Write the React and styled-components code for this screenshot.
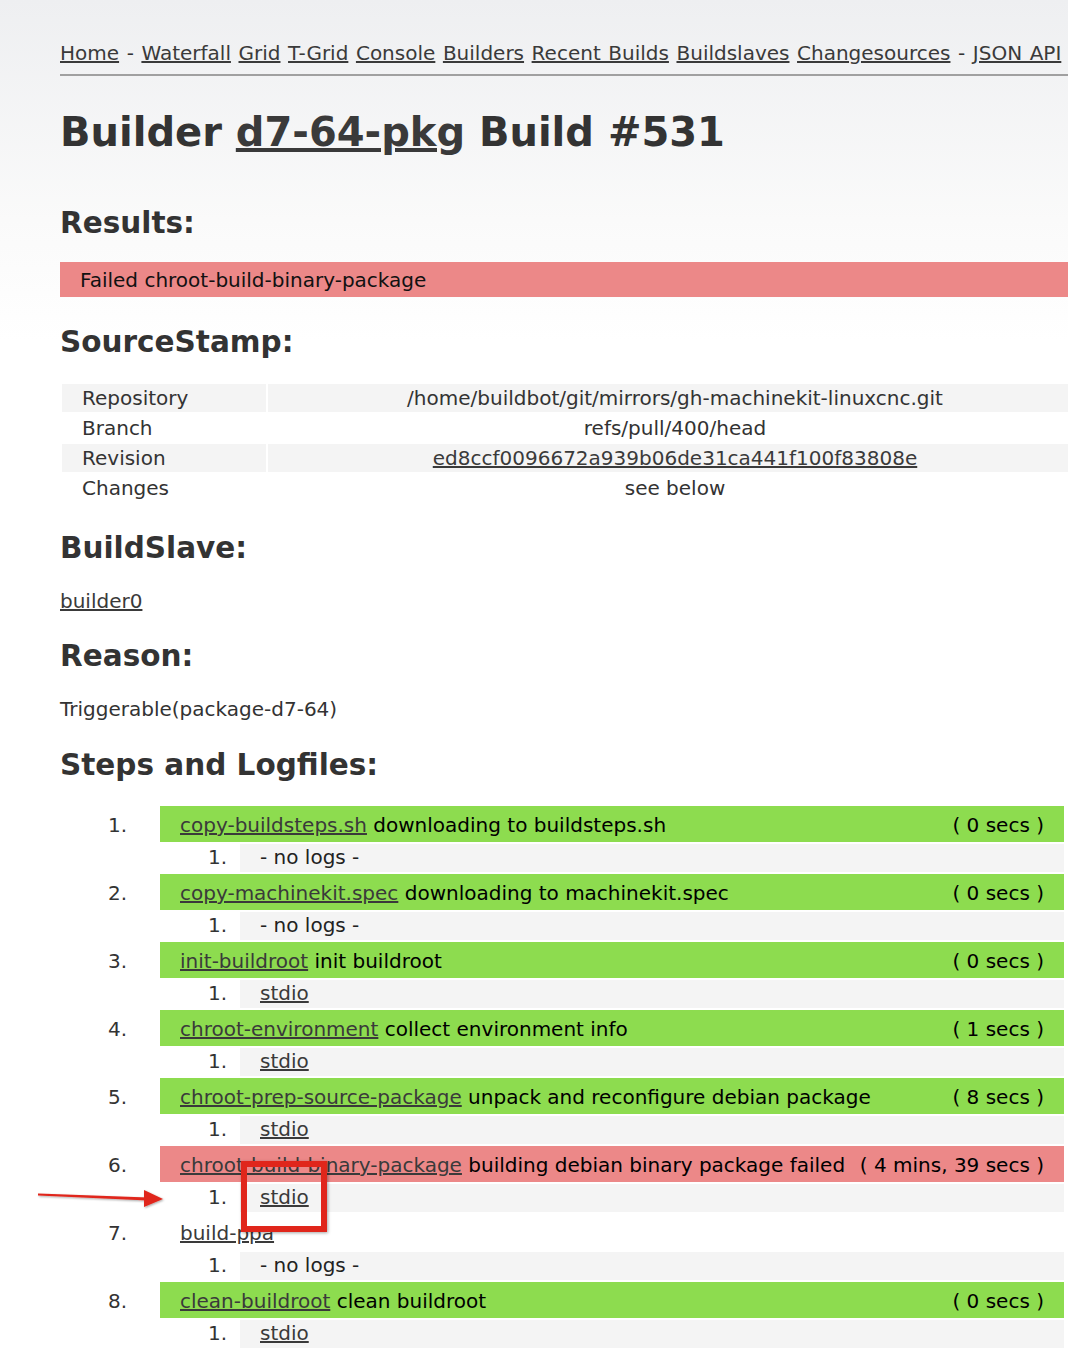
import React from 'react'
import styled, { createGlobalStyle } from 'styled-components'

const GlobalStyle = createGlobalStyle`
  html, body {
    margin: 0;
    padding: 0;
  }
  body {
    background: linear-gradient(to bottom, #eeeff1 0px, #fafafa 220px, #ffffff 340px) no-repeat #fff;
    font-family: "DejaVu Sans", Verdana, sans-serif;
    font-size: 20px;
    color: #333;
    overflow-x: hidden;
  }
  a {
    color: #3a3a3a;
    text-decoration: underline;
  }
`

const Page = styled.div`
  position: relative;
  width: 1022px;
  height: 1358px;
  padding-left: 60px;
  display: flex;
  flex-direction: column;
`

const Nav = styled.div`
  margin-top: 41px;
  line-height: 24px;
  padding-bottom: 9px;
  border-bottom: 2px solid #a0a0a0;
  white-space: nowrap;
  word-spacing: 1.2px;
`

const Title = styled.h1`
  margin: 32px 0 0;
  font-size: 40px;
  line-height: 48px;
  font-weight: bold;
  color: #333;
`

const Heading = styled.h2`
  margin: ${p => p.$top}px 0 0;
  font-size: 29.5px;
  line-height: 36px;
  font-weight: bold;
  color: #333;
`

const ResultBar = styled.div`
  margin-top: 21px;
  height: 35px;
  box-sizing: border-box;
  padding: 2px 20px 0;
  line-height: 33px;
  background: #ec8888;
  color: #111;
`

const InfoTable = styled.div`
  margin: 24px 0 0 2px;
  display: grid;
  grid-template-columns: 204px 1fr;
  gap: 2px;
`

const Cell = styled.div`
  height: 28px;
  line-height: 28px;
  background: ${p => (p.$alt ? '#f4f4f4' : 'transparent')};
  padding-left: ${p => (p.$label ? '20px' : '0')};
  text-align: ${p => (p.$label ? 'left' : 'center')};
  color: #333;
`

const Para = styled.div`
  margin-top: ${p => p.$top}px;
  line-height: 24px;
`

const Steps = styled.div`
  margin-top: 23px;
  margin-right: 18px;
  display: flex;
  flex-direction: column;
  gap: 2px;
`

const Row = styled.div`
  display: grid;
  grid-template-columns: ${p => p.$indent}px 1fr;
`

const Num = styled.div`
  text-align: right;
  padding-right: ${p => p.$pad}px;
  padding-top: ${p => p.$top || 0}px;
  line-height: ${p => p.$lh}px;
  color: #333;
`

const StepBar = styled.div`
  height: 36px;
  box-sizing: border-box;
  padding: 2px 20px 0;
  line-height: 34px;
  display: flex;
  justify-content: space-between;
  gap: 7px;
  white-space: nowrap;
  color: #000;
  background: ${p =>
    p.$status === 'success' ? '#8ddc4f' : p.$status === 'failure' ? '#ec8888' : 'transparent'};
`

const LogRow = styled.div`
  height: 28px;
  line-height: 27px;
  padding-left: 20px;
  background: #f4f4f4;
  color: #222;
`

const Mark = styled.div`
  position: absolute;
  left: 241px;
  top: 1161px;
  width: 86px;
  height: 71px;
  box-sizing: border-box;
  border: 6px solid #e0261b;
  box-shadow: 1px 1px 3px rgba(0, 0, 0, 0.35);
`

const ArrowSvg = styled.svg`
  position: absolute;
  left: 36px;
  top: 1185px;
`

const navLinks = [
  ['Home'],
  '-',
  ['Waterfall'],
  ['Grid'],
  ['T-Grid'],
  ['Console'],
  ['Builders'],
  ['Recent Builds'],
  ['Buildslaves'],
  ['Changesources'],
  '-',
  ['JSON API'],
]

const stamp = [
  ['Repository', '/home/buildbot/git/mirrors/gh-machinekit-linuxcnc.git'],
  ['Branch', 'refs/pull/400/head'],
  ['Revision', <a href="#">ed8ccf0096672a939b06de31ca441f100f83808e</a>],
  ['Changes', 'see below'],
]

const steps = [
  { name: 'copy-buildsteps.sh', text: 'downloading to buildsteps.sh', time: '( 0 secs )', status: 'success', log: null },
  { name: 'copy-machinekit.spec', text: 'downloading to machinekit.spec', time: '( 0 secs )', status: 'success', log: null },
  { name: 'init-buildroot', text: 'init buildroot', time: '( 0 secs )', status: 'success', log: 'stdio' },
  { name: 'chroot-environment', text: 'collect environment info', time: '( 1 secs )', status: 'success', log: 'stdio' },
  { name: 'chroot-prep-source-package', text: 'unpack and reconfigure debian package', time: '( 8 secs )', status: 'success', log: 'stdio' },
  { name: 'chroot-build-binary-package', text: 'building debian binary package failed', time: '( 4 mins, 39 secs )', status: 'failure', log: 'stdio' },
  { name: 'build-ppa', text: '', time: '', status: 'none', log: null },
  { name: 'clean-buildroot', text: 'clean buildroot', time: '( 0 secs )', status: 'success', log: 'stdio' },
]

const App = () => {
  return (
    <>
      <GlobalStyle />
      <Page>
        <Nav>
          {navLinks.map((l, i) => (
            <React.Fragment key={i}>
              {typeof l === 'string' ? l : <a href="#">{l[0]}</a>}
              {i < navLinks.length - 1 ? ' ' : ''}
            </React.Fragment>
          ))}
        </Nav>

        <Title>
          Builder <a href="#">d7-64-pkg</a> Build #531
        </Title>

        <Heading $top={49}>Results:</Heading>
        <ResultBar>Failed chroot-build-binary-package</ResultBar>

        <Heading $top={27}>SourceStamp:</Heading>
        <InfoTable>
          {stamp.map(([k, v], i) => (
            <React.Fragment key={k}>
              <Cell $label $alt={i % 2 === 0}>{k}</Cell>
              <Cell $alt={i % 2 === 0}>{v}</Cell>
            </React.Fragment>
          ))}
        </InfoTable>

        <Heading $top={28}>BuildSlave:</Heading>
        <Para $top={23}><a href="#">builder0</a></Para>

        <Heading $top={25}>Reason:</Heading>
        <Para $top={23}>Triggerable(package-d7-64)</Para>

        <Heading $top={26}>Steps and Logfiles:</Heading>
        <Steps>
          {steps.map((s, i) => (
            <React.Fragment key={s.name}>
              <Row $indent={100}>
                <Num $pad={33} $top={2} $lh={34}>{i + 1}.</Num>
                <StepBar $status={s.status}>
                  <span>
                    <a href="#">{s.name}</a>
                    {s.text ? ' ' + s.text : ''}
                  </span>
                  <span>{s.time}</span>
                </StepBar>
              </Row>
              <Row $indent={180}>
                <Num $pad={13} $lh={27}>1.</Num>
                <LogRow>{s.log ? <a href="#">{s.log}</a> : '- no logs -'}</LogRow>
              </Row>
            </React.Fragment>
          ))}
        </Steps>

        <ArrowSvg width="132" height="28" viewBox="0 0 132 28">
          <defs>
            <filter id="sh" x="-10%" y="-50%" width="120%" height="200%">
              <feDropShadow dx="1" dy="1" stdDeviation="1" floodOpacity="0.35" />
            </filter>
          </defs>
          <g filter="url(#sh)" fill="#e0261b" stroke="none">
            <path d="M2 8.5 L112 12.5 L112 15.5 L2 10.5 Z" />
            <path d="M108 5 L127 14 L108 22 Z" />
          </g>
        </ArrowSvg>
        <Mark />
      </Page>
    </>
  )
}

export default App
